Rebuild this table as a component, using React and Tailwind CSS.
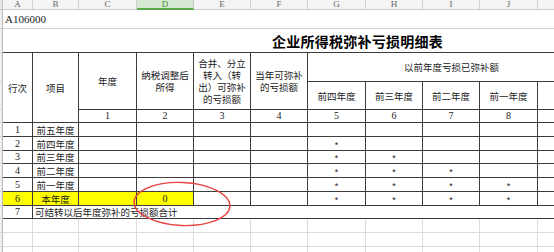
import React from 'react'

const cjk = "font-['Noto_Sans_CJK_SC',sans-serif]"
const serif = "font-['Liberation_Serif','Times_New_Roman',serif]"
const dark = 'border-r border-b border-[#3c3c3c]'
const light = 'border-r border-b border-[#dcdcdc]'
const center = 'flex items-center justify-center text-center'

const letters = ['A', 'B', 'C', 'D', 'E', 'F', 'G', 'H', 'I', 'J', 'K']

const years = [
  { n: 1, name: '前五年度', stars: 0 },
  { n: 2, name: '前四年度', stars: 1 },
  { n: 3, name: '前三年度', stars: 2 },
  { n: 4, name: '前二年度', stars: 3 },
  { n: 5, name: '前一年度', stars: 4 },
  { n: 6, name: '本年度', stars: 4, current: true },
]

function RowHead() {
  return <div className="bg-[#efefef] border-r border-b border-r-[#b8b8b8] border-b-[#d4d4d4]" />
}

export default function App() {
  return (
    <div className="relative w-[554px] h-[252px] overflow-hidden bg-white text-[#1b1b1b]">
      <div
        className={`grid grid-cols-[3px_30px_46px_58px_57px_57px_57px_58px_57px_57px_58px_58px] grid-rows-[10px_19px_24px_29px_28px_13px_14px_14px_13px_14px_14px_14px_13px_14px_14px_14px] ${cjk} text-[9.5px] leading-[12px]`}
      >
        {/* column letters */}
        <div className="bg-[#e6e6e6] border-r border-b border-[#c4c4c4]" />
        {letters.map((l) =>
          l === 'D' ? (
            <div
              key={l}
              className={`bg-[#d6e9d2] border-r border-[#c4c4c4] border-b-2 border-b-[#5cab4a] ${center} ${serif} text-[9px] leading-[9px] text-[#3f8f33]`}
            >
              {l}
            </div>
          ) : (
            <div
              key={l}
              className={`bg-[#f4f4f4] border-r border-b border-[#cfcfcf] ${center} ${serif} text-[9px] leading-[9px] text-[#666]`}
            >
              {l}
            </div>
          )
        )}

        {/* form code */}
        <RowHead />
        <div className={`col-span-11 border-b border-[#d4d4d4] flex items-center pl-[2px] ${serif} text-[11px]`}>
          A106000
        </div>

        {/* title */}
        <RowHead />
        <div className="col-span-11 border-b border-[#3c3c3c] flex items-center pl-[269px] pt-[1px]">
          <span className="text-[14px] font-bold tracking-[0.25px] text-black">企业所得税弥补亏损明细表</span>
        </div>

        {/* header row a */}
        <RowHead />
        <div className={`row-span-3 ${dark} ${center}`}>行次</div>
        <div className={`row-span-3 ${dark} ${center}`}>项目</div>
        <div className={`row-span-2 ${dark} ${center}`}>年度</div>
        <div className={`row-span-2 ${dark} ${center}`}>
          纳税调整后
          <br />
          所得
        </div>
        <div className={`row-span-2 ${dark} ${center}`}>
          合并、分立
          <br />
          转入（转
          <br />
          出）可弥补
          <br />
          的亏损额
        </div>
        <div className={`row-span-2 ${dark} ${center}`}>
          当年可弥补
          <br />
          的亏损额
        </div>
        <div className={`col-span-5 ${dark} ${center}`}>以前年度亏损已弥补额</div>

        {/* header row b */}
        <RowHead />
        {['前四年度', '前三年度', '前二年度', '前一年度', '合计'].map((t) => (
          <div key={t} className={`${dark} ${center}`}>
            {t}
          </div>
        ))}

        {/* column numbers */}
        <RowHead />
        {[1, 2, 3, 4, 5, 6, 7, 8, 9].map((n) => (
          <div key={n} className={`${dark} ${center} ${serif} text-[10px]`}>
            {n}
          </div>
        ))}

        {/* year rows */}
        {years.map((y) => {
          const bg = y.current ? 'bg-[#ffff00]' : ''
          return (
            <React.Fragment key={y.n}>
              <RowHead />
              <div className={`${dark} ${center} ${bg} ${serif} text-[10px]`}>{y.n}</div>
              <div className={`${dark} ${center} ${bg}`}>{y.name}</div>
              <div className={`${dark} ${bg}`} />
              <div className={`${dark} ${center} ${bg} ${serif} text-[10px]`}>{y.current ? '0' : ''}</div>
              <div className={dark} />
              <div className={dark} />
              {[0, 1, 2, 3].map((i) => (
                <div key={i} className={`${dark} ${center} font-['Liberation_Sans',sans-serif] text-[9px] pt-[2px]`}>
                  {i < y.stars ? '*' : ''}
                </div>
              ))}
              <div className={dark} />
            </React.Fragment>
          )
        })}

        {/* carry forward */}
        <RowHead />
        <div className={`${dark} ${center} ${serif} text-[10px]`}>7</div>
        <div className={`col-span-10 ${dark} flex items-center pl-[2px]`}>可结转以后年度弥补的亏损额合计</div>

        {/* empty sheet rows */}
        {[0, 1, 2].map((r) => (
          <React.Fragment key={r}>
            <RowHead />
            {letters.map((l) => (
              <div key={l} className={light} />
            ))}
          </React.Fragment>
        ))}
      </div>

      <svg className="absolute left-0 top-0 pointer-events-none" width="554" height="252">
        <ellipse
          cx="182"
          cy="204"
          rx="48"
          ry="21.5"
          transform="rotate(2.5 182 204)"
          fill="none"
          stroke="#e8423c"
          strokeWidth="1.4"
        />
      </svg>
    </div>
  )
}
